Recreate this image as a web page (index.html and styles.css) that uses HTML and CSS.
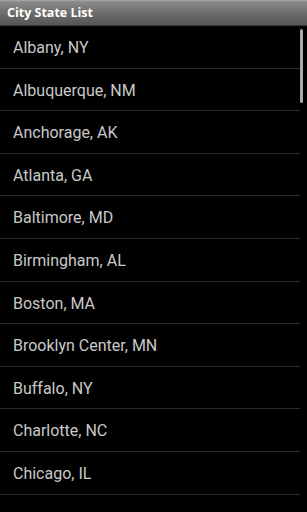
FILE: index.html
```html
<!DOCTYPE html>
<html lang="en">
<head>
    <meta charset="UTF-8">
    <meta name="viewport" content="width=device-width, initial-scale=1.0">
    <title>City State List</title>
    <link rel="stylesheet" href="styles.css">
</head>
<body>
    <div id="container">
        <div class="title_bar">City State List</div>
        <div class="list_wrap">
            <ul class="city_list">
                <li>Albany, NY</li>
                <li>Albuquerque, NM</li>
                <li>Anchorage, AK</li>
                <li>Atlanta, GA</li>
                <li>Baltimore, MD</li>
                <li>Birmingham, AL</li>
                <li>Boston, MA</li>
                <li>Brooklyn Center, MN</li>
                <li>Buffalo, NY</li>
                <li>Charlotte, NC</li>
                <li>Chicago, IL</li>
            </ul>
            <div class="scroll_thumb"></div>
        </div>
    </div>
</body>
</html>
```

FILE: styles.css
```css
* {
    margin: 0;
    padding: 0;
    box-sizing: border-box;
}

html, body {
    background-color: #000;
    height: 100%;
    overflow: hidden;
}

#container {
    width: 307px;
    height: 512px;
    font-family: "Open Sans", "Noto Sans", sans-serif;
}

.title_bar {
    height: 26px;
    padding-left: 7px;
    line-height: 26px;
    font-size: 12.5px;
    font-weight: bold;
    color: #fff;
    background: linear-gradient(#a8a8a8 0, #8a8a8a 2px, #6e6e6e 50%, #555 100%);
    border-bottom: 1px solid #3a3a3a;
}

.list_wrap {
    position: relative;
}

.city_list {
    list-style: none;
}

.city_list > li {
    height: 42.6px;
    padding-left: 13px;
    padding-top: 2px;
    line-height: 40px;
    font-family: Roboto, "Open Sans", sans-serif;
    font-size: 16px;
    color: #c9c9c9;
    border-bottom: 1px solid #2b2b2b;
    margin-right: 7px;
}

.scroll_thumb {
    position: absolute;
    top: 3px;
    right: 4px;
    width: 3px;
    height: 74px;
    border-radius: 2px;
    background-color: #a9a9a9;
}
```
